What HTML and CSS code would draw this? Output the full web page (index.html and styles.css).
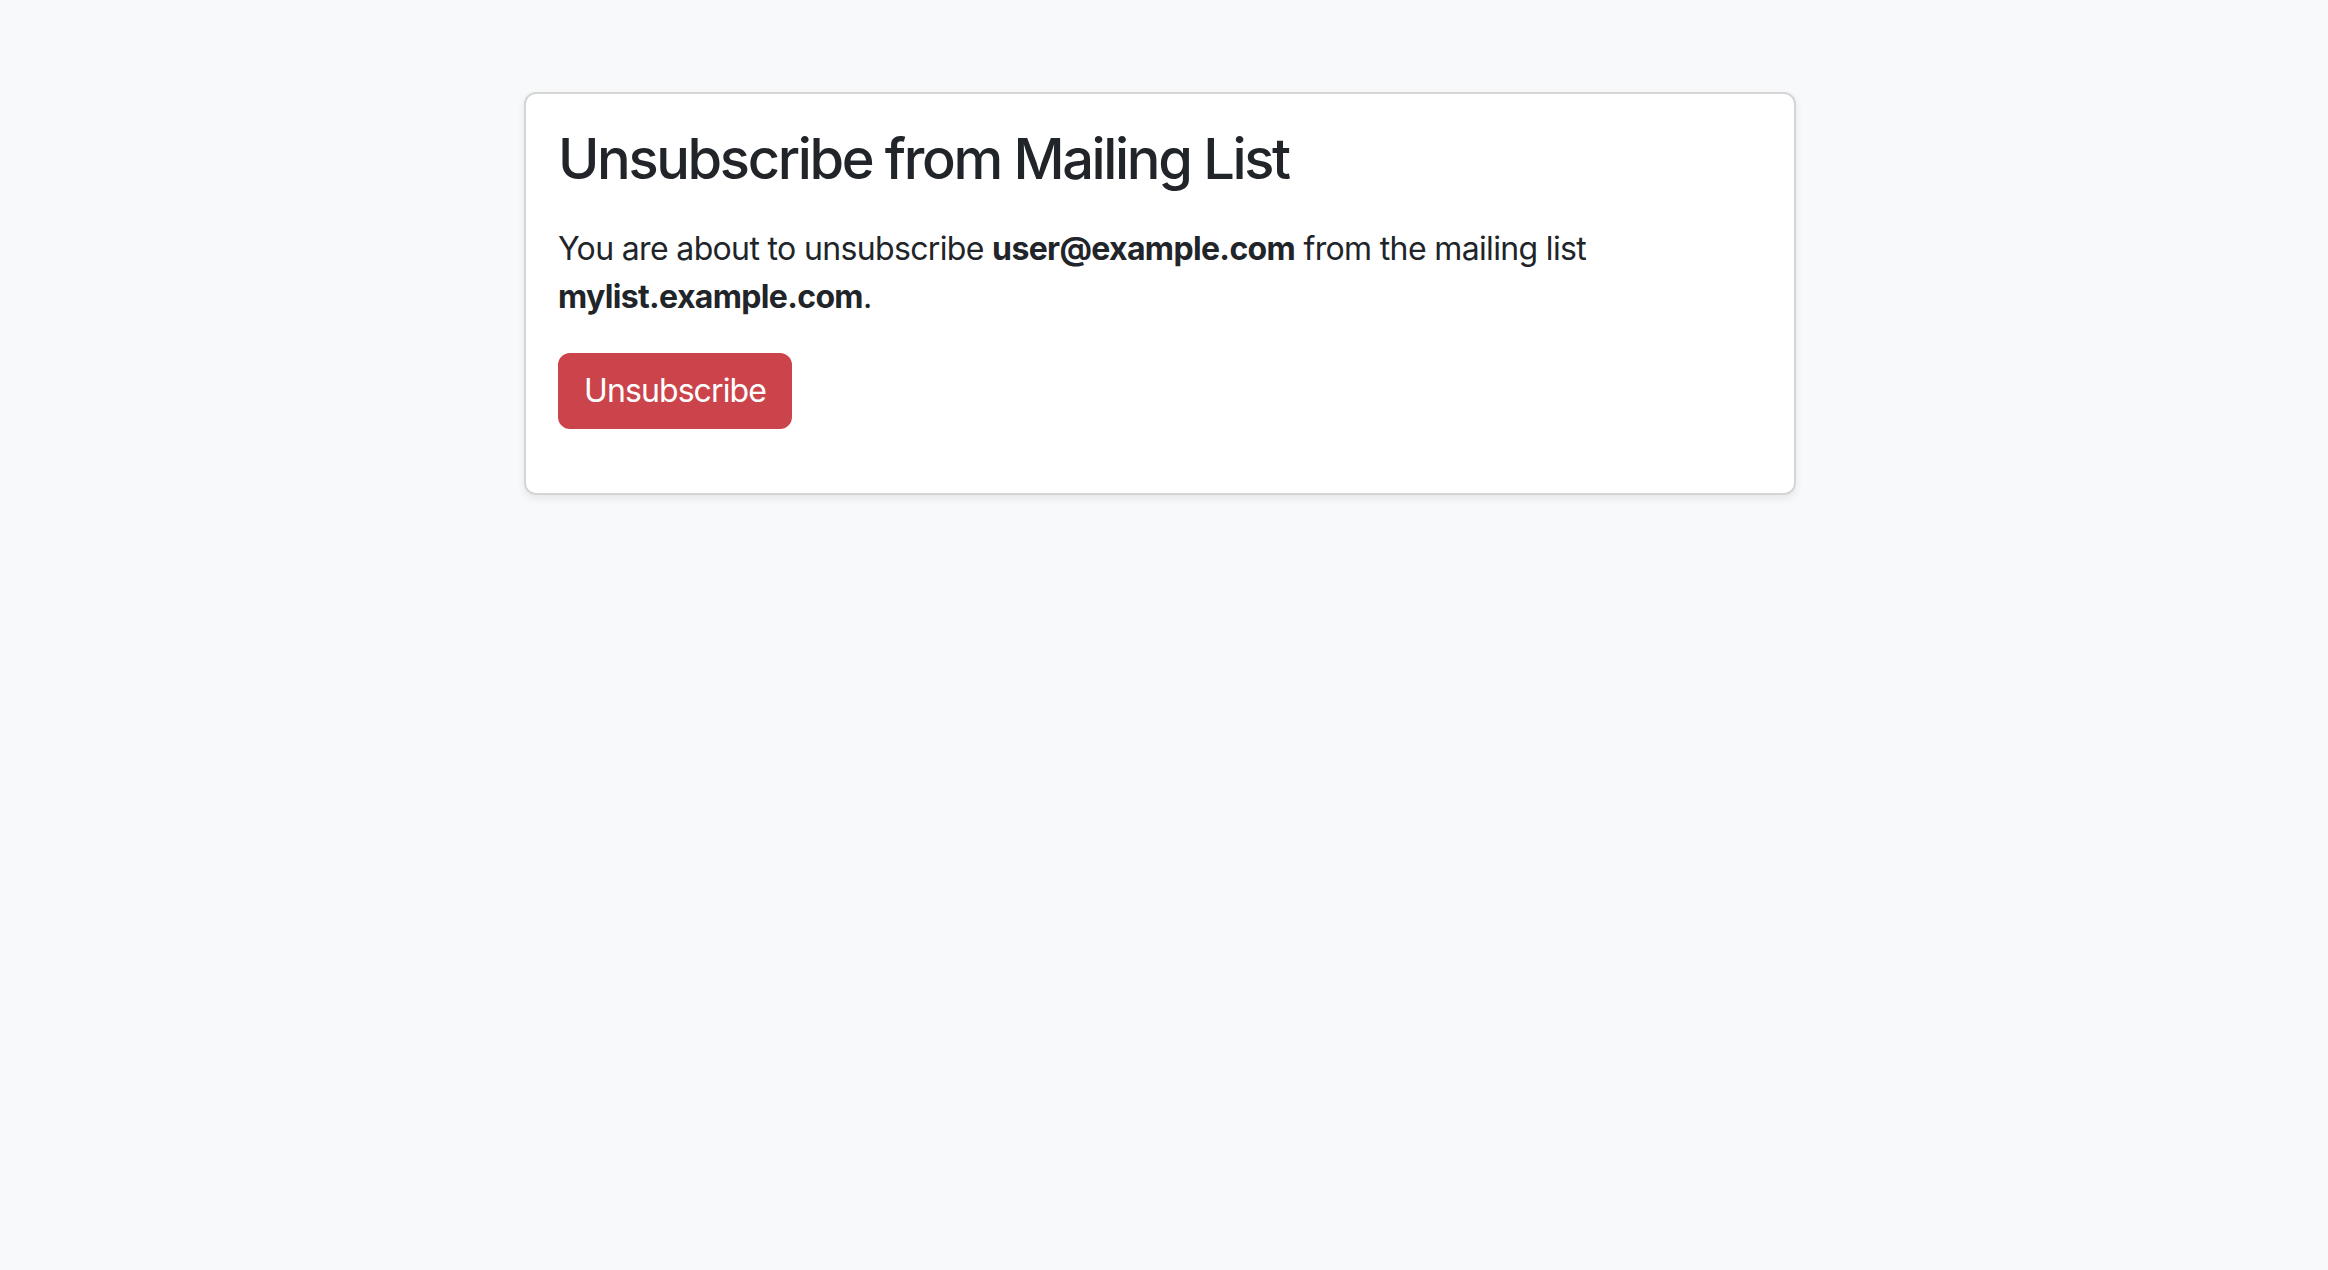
FILE: index.html
```html
<!DOCTYPE html>
<html lang="en">
<head>
<meta charset="utf-8">
<title>Unsubscribe</title>
<link rel="stylesheet" href="styles.css">
</head>
<body>
<main class="page">
  <section class="card">
    <h3 class="card-title">Unsubscribe from Mailing List</h3>
    <p class="card-text">You are about to unsubscribe <strong>user@example.com</strong> from the mailing list <strong>mylist.example.com</strong>.</p>
    <form class="form">
      <button type="button" class="btn-danger">Unsubscribe</button>
    </form>
  </section>
</main>
</body>
</html>
```

FILE: styles.css
```css
html, body {
  margin: 0;
  padding: 0;
}
body {
  background: #f8f9fa;
  color: #212529;
  font-family: Inter, "Noto Sans", "Liberation Sans", sans-serif;
  font-size: 32px;
  line-height: 1.5;
  min-height: 1270px;
}
.page {
  padding: 92px 0 0 524px;
}
.card {
  width: 1272px;
  box-sizing: border-box;
  background: #fff;
  border: 2px solid #d5d5d5;
  border-radius: 12px;
  box-shadow: 0 4px 8px rgba(0, 0, 0, 0.075);
  padding: 32px;
}
.card-title {
  margin: 0 0 32px 0;
  font-size: 56px;
  font-weight: 500;
  line-height: 1.2;
  letter-spacing: -2.35px;
}
.card-text {
  margin: 0 0 32px 0;
  letter-spacing: -0.65px;
}
.card-text strong {
  font-weight: 700;
}
.form {
  margin: 0 0 32px 0;
}
.btn-danger {
  font-family: inherit;
  font-size: 32px;
  line-height: 48px;
  letter-spacing: -0.9px;
  padding: 12px 24px;
  color: #fff;
  background: #cc444b;
  border: 2px solid #cc444b;
  border-radius: 12px;
  cursor: pointer;
}
```
